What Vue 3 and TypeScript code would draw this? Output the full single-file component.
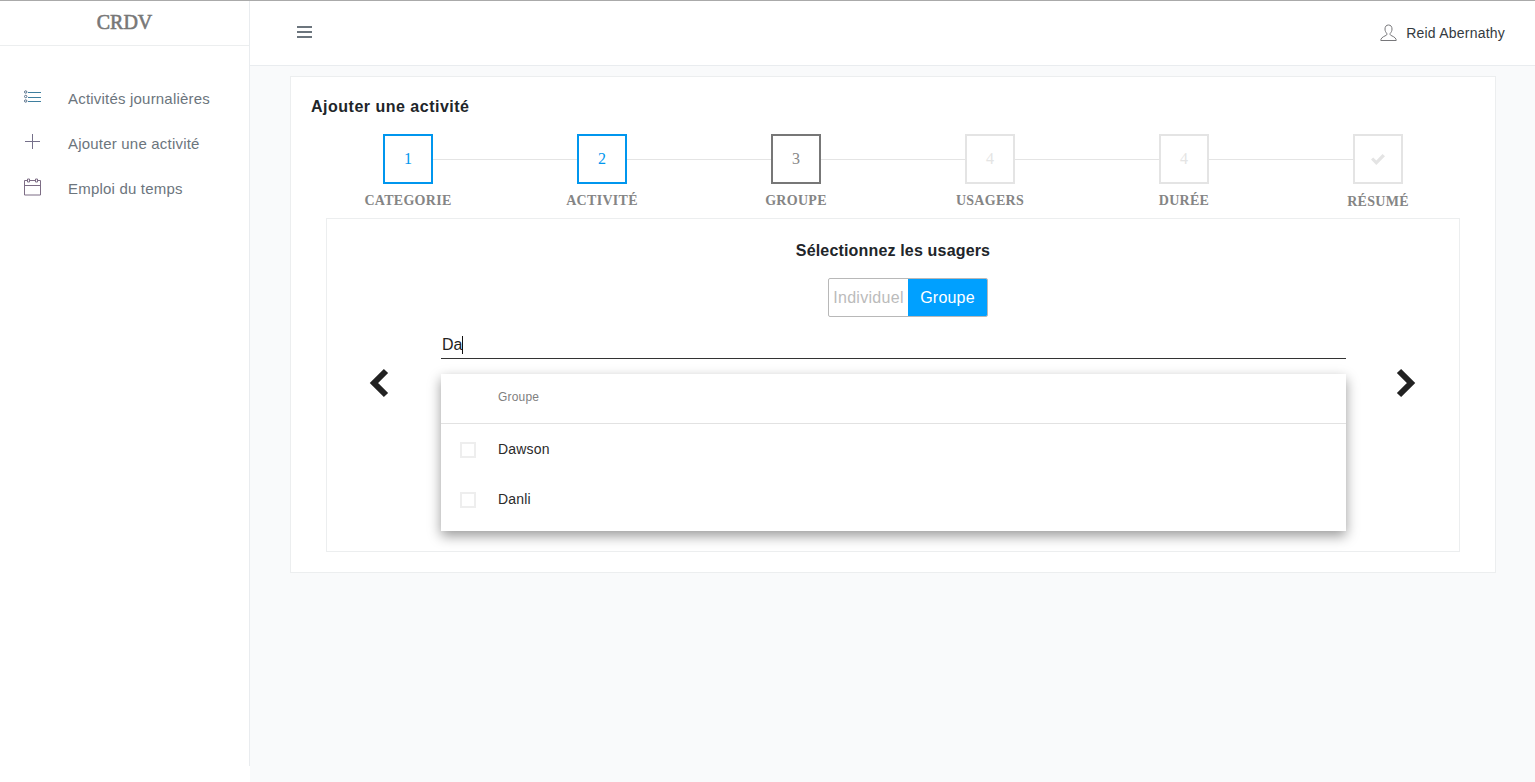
<template>
  <div class="app">
    <aside class="sidebar">
      <div class="sidebar-inner">
        <div class="logo">CRDV</div>
        <nav class="nav">
          <a v-for="item in navItems" :key="item.label" class="nav-item">
            <svg v-if="item.icon === 'list'" class="nav-icon" width="18" height="16" viewBox="0 0 18 16" fill="none" stroke="#3f7f9f" stroke-width="1">
              <path d="M4 4.500h13M4 9.500h13M4 13.500h13" />
              <circle cx="1.700" cy="4" r="1.200" stroke="#56708a" />
              <circle cx="1.700" cy="8.500" r="1.200" stroke="#56708a" />
              <circle cx="1.700" cy="13" r="1.200" stroke="#56708a" />
            </svg>
            <svg v-else-if="item.icon === 'plus'" class="nav-icon" width="18" height="17" viewBox="0 0 18 17" fill="none" stroke="#75708a" stroke-width="1">
              <path d="M8.500 1v15M1 8.500h15" />
            </svg>
            <svg v-else class="nav-icon" width="18" height="18" viewBox="0 0 18 18" fill="none" stroke="#7d6d85" stroke-width="1">
              <path d="M0.500 2.500h16v14.500H0.500zM0.500 7.500h16" />
              <path d="M3.500 1h2v3h-2zM11.500 1h2v3h-2z" fill="#fff" />
            </svg>
            <span>{{ item.label }}</span>
          </a>
        </nav>
      </div>
    </aside>

    <div class="page">
      <header class="topbar">
        <div class="burger"><i></i><i></i><i></i></div>
        <div class="user">
          <svg width="17" height="17" viewBox="0 0 17 17" fill="none" stroke="#77777a" stroke-width="1">
            <path d="M8.500 1C6.200 1 5 2.600 5 5c0 2 .8 3.300 1.700 4.200.4.500.3 1.600-.3 2C5 12.100 1.500 13 .8 15.700v.8h15.400v-.8C15.500 13 12 12.100 10.600 11.200c-.6-.4-.7-1.500-.3-2C11.200 8.300 12 7 12 5c0-2.400-1.200-4-3.500-4z" />
          </svg>
          <span>Reid Abernathy</span>
        </div>
      </header>

      <main class="content">
        <section class="card">
          <h1 class="card-title">Ajouter une activité</h1>

          <div class="stepper">
            <div v-for="(step, i) in steps" :key="step.label" class="step" :class="step.state">
              <div v-if="i < steps.length - 1" class="connector"></div>
              <div class="step-box">
                <svg v-if="step.check" width="14" height="11" viewBox="0 0 14 11" fill="#e4e4e4">
                  <path d="M0 5.600 2.200 3.400 5.300 6.500 11.500 0 14 2.300 5.300 11z" />
                </svg>
                <template v-else>{{ step.num }}</template>
              </div>
              <div class="step-label" :class="{ 'step-label-low': step.check }">{{ step.label }}</div>
            </div>
          </div>

          <div class="panel">
            <h2 class="panel-title">Sélectionnez les usagers</h2>
            <div class="toggle-row">
              <div class="toggle">
                <span class="toggle-off">Individuel</span>
                <span class="toggle-on">Groupe</span>
              </div>
            </div>

            <div class="picker">
              <svg class="chevron chevron-left" width="22" height="30" viewBox="0 0 22 30">
                <path d="M18 3 6 15l12 12" fill="none" stroke="#222" stroke-width="6" />
              </svg>
              <div class="picker-main">
                <div class="search">Da<span class="caret"></span></div>
                <div class="results">
                  <div class="results-head">Groupe</div>
                  <div v-for="name in groups" :key="name" class="result-row">
                    <span class="checkbox"></span>
                    <span>{{ name }}</span>
                  </div>
                </div>
              </div>
              <svg class="chevron chevron-right" width="22" height="30" viewBox="0 0 22 30">
                <path d="M5 3l12 12L5 27" fill="none" stroke="#222" stroke-width="6" />
              </svg>
            </div>
          </div>
        </section>
      </main>
    </div>
  </div>
</template>

<script setup lang="ts">
interface Step {
  num: string;
  label: string;
  state: 'done' | 'current' | 'todo';
  check?: boolean;
}

const navItems = [
  { label: 'Activités journalières', icon: 'list' },
  { label: 'Ajouter une activité', icon: 'plus' },
  { label: 'Emploi du temps', icon: 'calendar' }
];

const steps: Step[] = [
  { num: '1', label: 'CATEGORIE', state: 'done' },
  { num: '2', label: 'ACTIVITÉ', state: 'done' },
  { num: '3', label: 'GROUPE', state: 'current' },
  { num: '4', label: 'USAGERS', state: 'todo' },
  { num: '4', label: 'DURÉE', state: 'todo' },
  { num: '', label: 'RÉSUMÉ', state: 'todo', check: true }
];

const groups = ['Dawson', 'Danli'];
</script>

<style>
html,
body {
  margin: 0;
  background: #f9fafb;
}
</style>

<style scoped>
.app {
  display: flex;
  height: 782px;
  overflow: hidden;
  font-family: "Liberation Sans", Arial, sans-serif;
  position: relative;
  border-top: 1px solid #aaa;
  box-sizing: border-box;
}

.sidebar {
  width: 250px;
  flex: none;
  background: #fff;
}

.sidebar-inner {
  height: 765px;
  box-sizing: border-box;
  border-right: 1px solid #e9ecef;
}

.logo {
  height: 45px;
  box-sizing: border-box;
  border-bottom: 1px solid #eceeef;
  text-align: center;
  font-family: "Liberation Serif", serif;
  font-size: 20px;
  line-height: 42px;
  color: #777;
  -webkit-text-stroke: 0.6px #777;
}

.nav {
  padding-top: 30px;
}

.nav-item {
  display: flex;
  align-items: center;
  height: 45px;
  padding-left: 23px;
  font-size: 15px;
  color: #6c757d;
  letter-spacing: 0.2px;
  position: relative;
}

.nav-icon {
  position: absolute;
  left: 24px;
  top: 12px;
}

.nav-item span {
  margin-left: 45px;
}

.page {
  flex: 1;
  min-width: 0;
  display: flex;
  flex-direction: column;
}

.topbar {
  height: 65px;
  flex: none;
  box-sizing: border-box;
  background: #fff;
  border-bottom: 1px solid #e9ecef;
  display: flex;
  align-items: center;
  justify-content: space-between;
  padding: 0 30px 0 47px;
}

.burger {
  display: flex;
  flex-direction: column;
  gap: 3px;
  width: 15px;
  margin-bottom: 2px;
}

.burger i {
  display: block;
  height: 2px;
  background: #6c757d;
}

.user {
  display: flex;
  align-items: center;
  gap: 9px;
  font-size: 14px;
  letter-spacing: 0.22px;
  color: #343a40;
}

.user svg {
  margin-top: -2px;
}

.content {
  flex: 1;
  padding: 10px 39px 0 40px;
}

.card {
  height: 497px;
  box-sizing: border-box;
  background: #fff;
  border: 1px solid #eceeef;
  padding: 20px;
}

.card-title {
  margin: 0;
  font-size: 16px;
  line-height: 19px;
  font-weight: 700;
  color: #212529;
  letter-spacing: 0.5px;
}

.stepper {
  display: flex;
  margin-top: 18px;
}

.step {
  flex: 1;
  display: flex;
  flex-direction: column;
  align-items: center;
  position: relative;
}

.connector {
  position: absolute;
  left: 50%;
  width: 100%;
  top: 25px;
  height: 1px;
  background: #e4e4e4;
}

.step-box {
  width: 50px;
  height: 50px;
  box-sizing: border-box;
  border: 2px solid #e4e4e4;
  background: #fff;
  position: relative;
  display: flex;
  align-items: center;
  justify-content: center;
  font-family: "Liberation Serif", serif;
  font-size: 16px;
  color: #e4e4e4;
}

.step.done .step-box {
  border-color: #0096ee;
  color: #0096ee;
}

.step.current .step-box {
  border-color: #777;
  color: #888;
}

.step-label {
  margin-top: 9px;
  font-family: "Liberation Serif", serif;
  font-size: 14px;
  line-height: 16px;
  font-weight: 700;
  color: #858585;
  letter-spacing: 0.3px;
}

.step-label-low {
  margin-top: 10px;
}

.panel {
  margin: 8px 15px 0;
  height: 334px;
  box-sizing: border-box;
  border: 1px solid #eceeef;
  padding-top: 22px;
}

.panel-title {
  margin: 0;
  text-align: center;
  font-size: 16px;
  line-height: 19px;
  font-weight: 700;
  color: #212529;
  letter-spacing: 0.17px;
}

.toggle-row {
  display: flex;
  justify-content: center;
  margin-top: 18px;
  padding-left: 30px;
}

.toggle {
  display: flex;
  height: 39px;
  box-sizing: border-box;
  border: 1px solid #b8b8b8;
  border-radius: 2px;
  font-size: 16px;
  line-height: 37px;
  overflow: hidden;
}

.toggle-off {
  width: 79px;
  text-align: center;
  color: #bbb;
  letter-spacing: 0.3px;
}

.toggle-on {
  width: 79px;
  text-align: center;
  color: #fff;
  background: #00a0ff;
  letter-spacing: 0.2px;
}

.picker {
  display: flex;
  justify-content: center;
  align-items: flex-start;
  margin-top: 12px;
  padding-right: 2px;
}

.chevron {
  flex: none;
  margin-top: 39px;
}

.chevron-left {
  margin-right: 51px;
}

.chevron-right {
  margin-left: 48px;
}

.picker-main {
  width: 905px;
}

.search {
  height: 30px;
  box-sizing: border-box;
  border-bottom: 1px solid #333;
  padding-left: 1px;
  font-size: 16px;
  line-height: 31px;
  color: #222;
  display: flex;
  align-items: flex-start;
}

.caret {
  display: inline-block;
  width: 1px;
  height: 18px;
  margin-top: 7px;
  background: #111;
}

.results {
  margin-top: 15px;
  background: #fff;
  box-shadow: 0 5px 12px rgba(0, 0, 0, 0.4);
  height: 157px;
}

.results-head {
  height: 50px;
  box-sizing: border-box;
  border-bottom: 1px solid #e2e2e2;
  padding-left: 57px;
  font-size: 12px;
  line-height: 46px;
  color: #808080;
  letter-spacing: 0.2px;
}

.result-row {
  height: 50px;
  display: flex;
  align-items: center;
  font-size: 14px;
  color: #2a2a2a;
  letter-spacing: 0.2px;
}

.checkbox {
  width: 16px;
  height: 16px;
  box-sizing: border-box;
  border: 2px solid #eee;
  margin: 2px 22px 0 19px;
}
</style>
